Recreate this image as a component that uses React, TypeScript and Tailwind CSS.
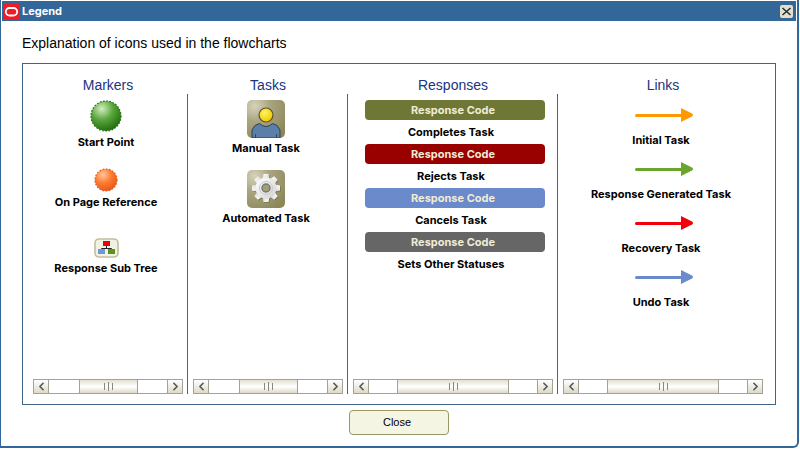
import type { ReactNode } from 'react';
import { ChevronLeft, ChevronRight } from 'lucide-react';

interface Item {
    label: string;
    icon: ReactNode;
}

// circle with a serrated edge, used by the flowchart markers
function Seal({ size, id, light, mid, dark }: { size: number; id: string; light: string; mid: string; dark: string }) {
    const r = size / 2;
    return (
        <svg width={size} height={size} viewBox={`0 0 ${size} ${size}`} aria-hidden="true">
            <defs>
                <radialGradient id={id} cx="0.36" cy="0.26" r="0.75">
                    <stop offset="0" stopColor={light} />
                    <stop offset="0.5" stopColor={mid} />
                    <stop offset="1" stopColor={dark} />
                </radialGradient>
            </defs>
            <circle cx={r} cy={r} r={r - 1} fill={`url(#${id})`} />
            <circle cx={r} cy={r} r={r - 1} fill="none" stroke={dark} strokeWidth="1.2" strokeDasharray="1.7 1.5" />
        </svg>
    );
}

function SubTreeIcon() {
    return (
        <svg width="25" height="20" viewBox="0 0 25 20" aria-hidden="true">
            <rect x="1" y="1" width="23" height="18" rx="4" fill="#f3f0e4" stroke="#c3bd9f" strokeWidth="1.6" />
            <path d="M12.500 8v2.500M7.500 12v-1.500h10V12" fill="none" stroke="#222" strokeWidth="1" />
            <rect x="9" y="3" width="7" height="5" fill="#e8000b" />
            <rect x="4" y="11" width="7" height="5" fill="#6a9bd8" />
            <rect x="14" y="11" width="7" height="5" fill="#5c9320" />
        </svg>
    );
}

function Tile({ id, children }: { id: string; children: ReactNode }) {
    return (
        <svg width="38" height="38" viewBox="0 0 38 38" aria-hidden="true">
            <defs>
                <radialGradient id={id} cx="0.2" cy="0.16" r="1">
                    <stop offset="0" stopColor="#d6d3bb" />
                    <stop offset="0.4" stopColor="#aaa580" />
                    <stop offset="1" stopColor="#8c8759" />
                </radialGradient>
                <linearGradient id="metal" x1="0" y1="0" x2="1" y2="1">
                    <stop offset="0" stopColor="#ffffff" />
                    <stop offset="1" stopColor="#d2d2d2" />
                </linearGradient>
                <radialGradient id="head" cx="0.4" cy="0.35" r="0.7">
                    <stop offset="0" stopColor="#fff45a" />
                    <stop offset="1" stopColor="#efc400" />
                </radialGradient>
            </defs>
            <rect width="38" height="38" rx="5" fill={`url(#${id})`} />
            {children}
        </svg>
    );
}

function PersonIcon() {
    return (
        <Tile id="tile-person">
            <path d="M5 38V30L8 25.500L12.500 23.500Q19 29.500 25.500 23.500L30 25.500L33 30V38z" fill="#5b7fa8" stroke="#2c3e52" strokeWidth="1" />
            <path d="M8.500 38v-4M29.500 38v-4" stroke="#2e4561" strokeWidth="1" />
            <circle cx="19" cy="15" r="7" fill="url(#head)" stroke="#5c5428" strokeWidth="1.2" />
        </Tile>
    );
}

const TEETH = [0, 45, 90, 135, 180, 225, 270, 315];

function GearIcon() {
    return (
        <Tile id="tile-gear">
            <g fill="#6f6b4b" opacity="0.6" transform="translate(1 1)">
                {TEETH.map(a => (
                    <path key={a} d="M15.500 10L16.500 4h5L22.500 10z" transform={`rotate(${a} 19 18)`} />
                ))}
                <circle cx="19" cy="18" r="10.500" />
            </g>
            <g fill="url(#metal)">
                {TEETH.map(a => (
                    <path key={a} d="M15.500 10L16.500 4h5L22.500 10z" transform={`rotate(${a} 19 18)`} />
                ))}
                <circle cx="19" cy="18" r="10.500" />
            </g>
            <circle cx="19" cy="18" r="6.500" fill="none" stroke="#c9c9c9" strokeWidth="1" />
            <circle cx="19" cy="18" r="4" fill="#a39e78" stroke="#77777a" strokeWidth="1.5" />
        </Tile>
    );
}

function Arrow({ color }: { color: string }) {
    return (
        <svg width="58" height="14" viewBox="0 0 58 14" aria-hidden="true">
            <path d="M1.500 7.500H48" stroke={color} strokeWidth="3" strokeLinecap="round" />
            <path d="M46 0L57 5.500q2 1.500 0 3L46 14z" fill={color} />
        </svg>
    );
}

const markers: (Item & { box: string })[] = [
    { label: 'Start Point', box: 'h-8', icon: <Seal size={32} id="seal-green" light="#d3efc0" mid="#58a63c" dark="#24700f" /> },
    { label: 'On Page Reference', box: 'mt-[18px] h-6', icon: <Seal size={24} id="seal-orange" light="#ffc9a0" mid="#ff7c33" dark="#e8591a" /> },
    { label: 'Response Sub Tree', box: 'mt-7 h-5', icon: <SubTreeIcon /> },
];

const tasks: Item[] = [
    { label: 'Manual Task', icon: <PersonIcon /> },
    { label: 'Automated Task', icon: <GearIcon /> },
];

const responses = [
    { label: 'Completes Task', color: 'bg-[#6f7736]' },
    { label: 'Rejects Task', color: 'bg-[#990000]' },
    { label: 'Cancels Task', color: 'bg-[#6b8acb]' },
    { label: 'Sets Other Statuses', color: 'bg-[#666666]' },
];

const links = [
    { label: 'Initial Task', color: '#ff9900' },
    { label: 'Response Generated Task', color: '#6aa62e' },
    { label: 'Recovery Task', color: '#f00008' },
    { label: 'Undo Task', color: '#6b8acb' },
];

function Scrollbar({ name, thumb }: { name: string; thumb: string }) {
    const button = 'flex w-[15px] items-center justify-center bg-linear-to-b from-white to-[#dedac9] text-[#555]';
    return (
        <div className="mt-auto flex h-[15px] border border-[#a5a294] bg-white">
            <button type="button" aria-label={`Scroll ${name} left`} className={`${button} border-r border-[#a5a294]`}>
                <ChevronLeft size={13} strokeWidth={3} />
            </button>
            <div className="flex flex-1 justify-center">
                <div className={`${thumb} flex items-center justify-center gap-[3px] border-x border-[#a5a294] bg-linear-to-b from-[#e3dfcf] via-white to-[#dedac9]`}>
                    <span className="h-[7px] w-px bg-[#888]" />
                    <span className="h-[9px] w-px bg-[#888]" />
                    <span className="h-[7px] w-px bg-[#888]" />
                </div>
            </div>
            <button type="button" aria-label={`Scroll ${name} right`} className={`${button} border-l border-[#a5a294]`}>
                <ChevronRight size={13} strokeWidth={3} />
            </button>
        </div>
    );
}

function Column({ title, thumb, last, children }: { title: string; thumb: string; last?: boolean; children: ReactNode }) {
    return (
        <section className="flex flex-col">
            <h2 className="text-center text-sm leading-[18px] text-[#213380]">{title}</h2>
            <div className={`flex min-h-[300px] flex-1 flex-col border-r pr-1 pl-[5px] ${last ? 'border-r-transparent' : 'border-r-[#666633]'}`}>
                <div className="pt-1.5">{children}</div>
                <Scrollbar name={title} thumb={thumb} />
            </div>
        </section>
    );
}

function Label({ children }: { children: ReactNode }) {
    return <p className="text-center font-['Inter',sans-serif] text-[11px] leading-4 font-bold whitespace-nowrap text-black">{children}</p>;
}

export default function App() {
    return (
        <div className="bg-white font-['Liberation_Sans',Arial,sans-serif]">
            <main className="mr-px rounded-br-md border-r-2 border-b-2 border-l border-[#336699] px-px pt-px">
                <header className="flex h-5 items-center bg-[#336699] pr-[3px] pl-0.5">
                    <svg width="15" height="15" viewBox="0 0 15 15" aria-hidden="true">
                        <rect width="15" height="15" fill="#ee1c25" />
                        <rect x="1.800" y="4" width="11.400" height="7.500" rx="3.700" fill="none" stroke="#fff" strokeWidth="1.800" />
                    </svg>
                    <h1 className="ml-[3px] font-['Inter',sans-serif] text-[11px] font-bold text-white">Legend</h1>
                    <button type="button" aria-label="Close window" className="ml-auto flex size-[13px] items-center justify-center rounded-xs bg-[#e2e0c8]">
                        <svg width="9" height="9" viewBox="0 0 9 9" aria-hidden="true">
                            <path d="M0.500 1L8.500 8M8.500 1L0.500 8" stroke="#1d2b3a" strokeWidth="1.5" />
                        </svg>
                    </button>
                </header>

                <div className="pr-5 pb-[11px] pl-5">
                    <p className="pt-3 pb-[10px] text-sm leading-5 text-black">Explanation of icons used in the flowcharts</p>

                    <div className="grid grid-cols-[16fr_16fr_21fr_21fr] border border-[#406586] pt-3 pr-[7px] pb-2.5 pl-[5px]">
                        <Column title="Markers" thumb="w-1/2">
                            <ul className="pr-1">
                                {markers.map(m => (
                                    <li key={m.label}>
                                        <div className={`flex items-center justify-center ${m.box}`}>{m.icon}</div>
                                        <div className="pt-0.5">
                                            <Label>{m.label}</Label>
                                        </div>
                                    </li>
                                ))}
                            </ul>
                        </Column>

                        <Column title="Tasks" thumb="w-1/2">
                            <ul className="space-y-3.5 pr-1">
                                {tasks.map(t => (
                                    <li key={t.label} className="space-y-0.5">
                                        <div className="flex justify-center">{t.icon}</div>
                                        <Label>{t.label}</Label>
                                    </li>
                                ))}
                            </ul>
                        </Column>

                        <Column title="Responses" thumb="w-2/3">
                            <ul className="space-y-1 pr-2 pl-3">
                                {responses.map(r => (
                                    <li key={r.label} className="space-y-1">
                                        <div className={`rounded-sm pr-1 text-center font-['Inter',sans-serif] text-[11px] leading-5 font-bold text-[#f0ecd6] ${r.color}`}>
                                            Response Code
                                        </div>
                                        <div className="pr-2">
                                            <Label>{r.label}</Label>
                                        </div>
                                    </li>
                                ))}
                            </ul>
                        </Column>

                        <Column title="Links" thumb="w-2/3" last>
                            <ul className="space-y-[14px] pt-2">
                                {links.map(l => (
                                    <li key={l.label} className="space-y-2.5">
                                        <div className="flex justify-center pl-0.5">
                                            <Arrow color={l.color} />
                                        </div>
                                        <div className="pr-1">
                                            <Label>{l.label}</Label>
                                        </div>
                                    </li>
                                ))}
                            </ul>
                        </Column>
                    </div>

                    <div className="flex justify-center pt-[5px]">
                        <button type="button" className="h-[25px] w-[100px] rounded-sm border border-[#999966] bg-[#f5f5e4] pr-1 text-[11px] text-black">
                            Close
                        </button>
                    </div>
                </div>
            </main>
        </div>
    );
}
